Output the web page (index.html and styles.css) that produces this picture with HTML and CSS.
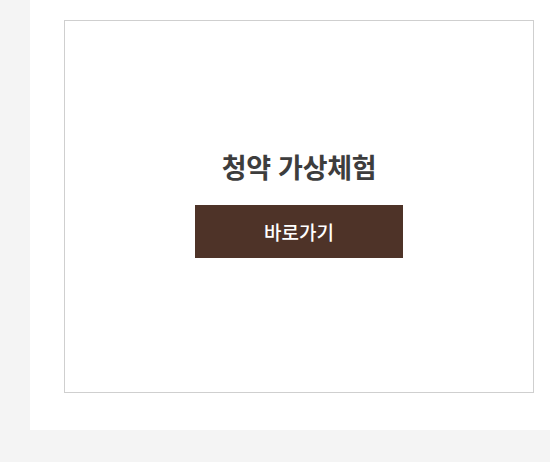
FILE: index.html
```html
<!DOCTYPE html>
<html lang="ko">
<head>
    <meta charset="UTF-8">
    <title>청약 가상체험</title>
    <link rel="stylesheet" href="styles.css">
</head>
<body>
    <div class="panel">
        <div class="experience-box">
            <h2 class="experience-title">청약 가상체험</h2>
            <a class="go-button" href="#">바로가기</a>
        </div>
    </div>
</body>
</html>
```

FILE: styles.css
```css
body {
    margin: 0;
    padding: 0;
    background-color: #f4f4f4;
    font-family: "Noto Sans CJK KR", "Noto Sans", sans-serif;
}

.panel {
    margin-left: 30px;
    width: 520px;
    height: 430px;
    box-sizing: border-box;
    padding: 20px 16px 0 34px;
    background-color: #fff;
}

.experience-box {
    height: 373px;
    box-sizing: border-box;
    border: 1px solid #cfcfcf;
    display: flex;
    flex-direction: column;
    align-items: center;
    justify-content: center;
    padding-bottom: 6px;
}

.experience-title {
    margin: 0 0 21px;
    font-size: 27px;
    font-weight: 700;
    line-height: 34px;
    color: #3d3d3d;
    letter-spacing: -0.3px;
}

.go-button {
    display: flex;
    align-items: center;
    justify-content: center;
    width: 208px;
    height: 53px;
    background-color: #4e3328;
    color: #fff;
    font-size: 19px;
    font-weight: 500;
    text-decoration: none;
}
```
